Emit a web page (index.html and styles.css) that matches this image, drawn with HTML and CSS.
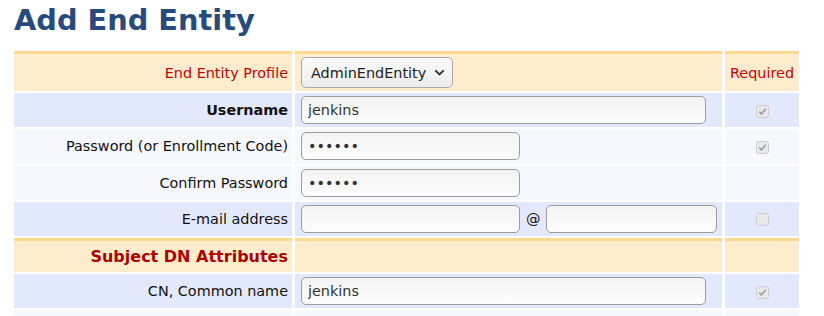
FILE: index.html
```html
<!DOCTYPE html>
<html lang="en">
<head>
    <meta charset="UTF-8">
    <meta name="viewport" content="width=device-width, initial-scale=1.0">
    <title>Add End Entity</title>
    <link rel="stylesheet" href="styles.css">
</head>
<body>
    <h1 class="page-title">Add End Entity</h1>

    <table class="entity-table">
        <colgroup>
            <col class="col-label">
            <col class="col-field">
            <col class="col-required">
        </colgroup>
        <tr class="section-row profile-row">
            <td class="label-cell label-red">End Entity Profile</td>
            <td class="field-cell">
                <span class="select-wrap">
                    <select class="profile-select" name="profile">
                        <option>AdminEndEntity</option>
                    </select>
                    <svg class="select-arrow" width="11" height="7" viewBox="0 0 11 7">
                        <path d="M1.3 1.4 L5.5 5.4 L9.7 1.4" fill="none" stroke="#333" stroke-width="2"/>
                    </svg>
                </span>
            </td>
            <td class="req-cell req-title">Required</td>
        </tr>
        <tr class="row-blue">
            <td class="label-cell"><b>Username</b></td>
            <td class="field-cell"><input type="text" class="text-input wide" value="jenkins"></td>
            <td class="req-cell">
                <span class="req-check">
                    <svg width="13" height="13" viewBox="0 0 13 13"><rect x="0.5" y="0.5" width="12" height="12" rx="2" fill="#e9e9e9" stroke="#cdcdcd"/><path d="M3.2 6.6 L5.5 8.9 L9.8 3.9" fill="none" stroke="#a3a3a3" stroke-width="1.8"/></svg>
                </span>
            </td>
        </tr>
        <tr class="row-light">
            <td class="label-cell">Password (or Enrollment Code)</td>
            <td class="field-cell"><input type="password" class="text-input short" value="foo123"></td>
            <td class="req-cell">
                <span class="req-check">
                    <svg width="13" height="13" viewBox="0 0 13 13"><rect x="0.5" y="0.5" width="12" height="12" rx="2" fill="#e9e9e9" stroke="#cdcdcd"/><path d="M3.2 6.6 L5.5 8.9 L9.8 3.9" fill="none" stroke="#a3a3a3" stroke-width="1.8"/></svg>
                </span>
            </td>
        </tr>
        <tr class="row-light">
            <td class="label-cell">Confirm Password</td>
            <td class="field-cell"><input type="password" class="text-input short" value="foo123"></td>
            <td class="req-cell"></td>
        </tr>
        <tr class="row-blue">
            <td class="label-cell">E-mail address</td>
            <td class="field-cell">
                <div class="email-fields">
                    <input type="text" class="text-input short">
                    <span class="at-sign">@</span>
                    <input type="text" class="text-input domain">
                </div>
            </td>
            <td class="req-cell">
                <span class="req-check">
                    <svg width="13" height="13" viewBox="0 0 13 13"><rect x="0.5" y="0.5" width="12" height="12" rx="2" fill="#e9e9e9" stroke="#cdcdcd"/></svg>
                </span>
            </td>
        </tr>
        <tr class="section-row subject-row">
            <td class="label-cell section-title">Subject DN Attributes</td>
            <td class="field-cell"></td>
            <td class="req-cell"></td>
        </tr>
        <tr class="row-blue">
            <td class="label-cell">CN, Common name</td>
            <td class="field-cell"><input type="text" class="text-input wide" value="jenkins"></td>
            <td class="req-cell">
                <span class="req-check">
                    <svg width="13" height="13" viewBox="0 0 13 13"><rect x="0.5" y="0.5" width="12" height="12" rx="2" fill="#e9e9e9" stroke="#cdcdcd"/><path d="M3.2 6.6 L5.5 8.9 L9.8 3.9" fill="none" stroke="#a3a3a3" stroke-width="1.8"/></svg>
                </span>
            </td>
        </tr>
        <tr class="row-light last-row">
            <td class="label-cell"></td>
            <td class="field-cell top-align">
                <span class="field-check">
                    <svg width="13" height="13" viewBox="0 0 13 13"><rect x="0.5" y="0.5" width="12" height="12" rx="6" fill="#efefef" stroke="#c4c4c4"/></svg>
                </span>
            </td>
            <td class="req-cell"></td>
        </tr>
    </table>
</body>
</html>
```

FILE: styles.css
```css
body {
    font-family: "DejaVu Sans", Verdana, sans-serif;
    font-size: 14.4px;
    margin: 0;
    padding: 0 11px;
    color: #111;
    background-color: #fff;
}

.page-title {
    font-size: 28.8px;
    font-weight: bold;
    line-height: 34px;
    color: #284b7d;
    margin: 3px 0 12px 3px;
}

.entity-table {
    table-layout: fixed;
    width: 791px;
    border-collapse: separate;
    border-spacing: 3px 2px;
}

.col-label {
    width: 278px;
}

.col-field {
    width: 427px;
}

.col-required {
    width: 74px;
}

.entity-table td {
    padding: 3px 4px 3px 6px;
    vertical-align: middle;
    height: 28.25px;
}

.section-row td {
    background-color: #feedcc;
    border-top: 3px solid #fcd98e;
}

.profile-row td {
    height: 31px;
}

.subject-row td {
    height: 25px;
}

.row-blue td {
    background-color: #e3e9fd;
}

.row-light td {
    background-color: #f6f8fe;
}

.label-cell {
    text-align: right;
    white-space: nowrap;
}

.entity-table td.label-cell {
    padding-left: 4px;
}

.label-red {
    color: #c2000b;
}

.section-title {
    color: #aa0000;
    font-weight: bold;
    font-size: 16px;
}

.req-cell {
    text-align: center;
}

.entity-table td.req-cell {
    padding-left: 2px;
    padding-right: 2px;
}

.req-title {
    color: #c2000b;
}

.req-check,
.field-check {
    display: inline-block;
    width: 13px;
    height: 13px;
    vertical-align: middle;
}

.req-check svg,
.field-check svg {
    display: block;
}

.entity-table td.top-align {
    vertical-align: top;
}

.field-check {
    margin-top: 1px;
    margin-left: 3px;
}

/* select with a drawn chevron over it */
.select-wrap {
    position: relative;
    display: inline-block;
    vertical-align: middle;
}

.profile-select {
    appearance: none;
    -webkit-appearance: none;
    font-family: inherit;
    font-size: 14.4px;
    color: #222;
    height: 31px;
    width: 152px;
    padding: 0 22px 0 9px;
    border: 1px solid #a9a9a9;
    border-radius: 5px;
    background: linear-gradient(#fbfbfb, #ececec);
    display: block;
}

.select-arrow {
    position: absolute;
    right: 8px;
    top: 12px;
    pointer-events: none;
}

.text-input {
    font-family: inherit;
    font-size: 14.4px;
    color: #333;
    height: 28px;
    box-sizing: border-box;
    padding: 0 6px;
    border: 1px solid #9c9c9c;
    border-radius: 5px;
    background: linear-gradient(#f3f3f3, #fdfdfd);
    display: block;
    outline: none;
}

.text-input.wide {
    width: 405px;
}

.text-input.short {
    width: 219px;
}

.text-input.domain {
    width: 171px;
}

.email-fields {
    display: flex;
    align-items: center;
    gap: 6px;
}

.at-sign {
    color: #111;
}
```
